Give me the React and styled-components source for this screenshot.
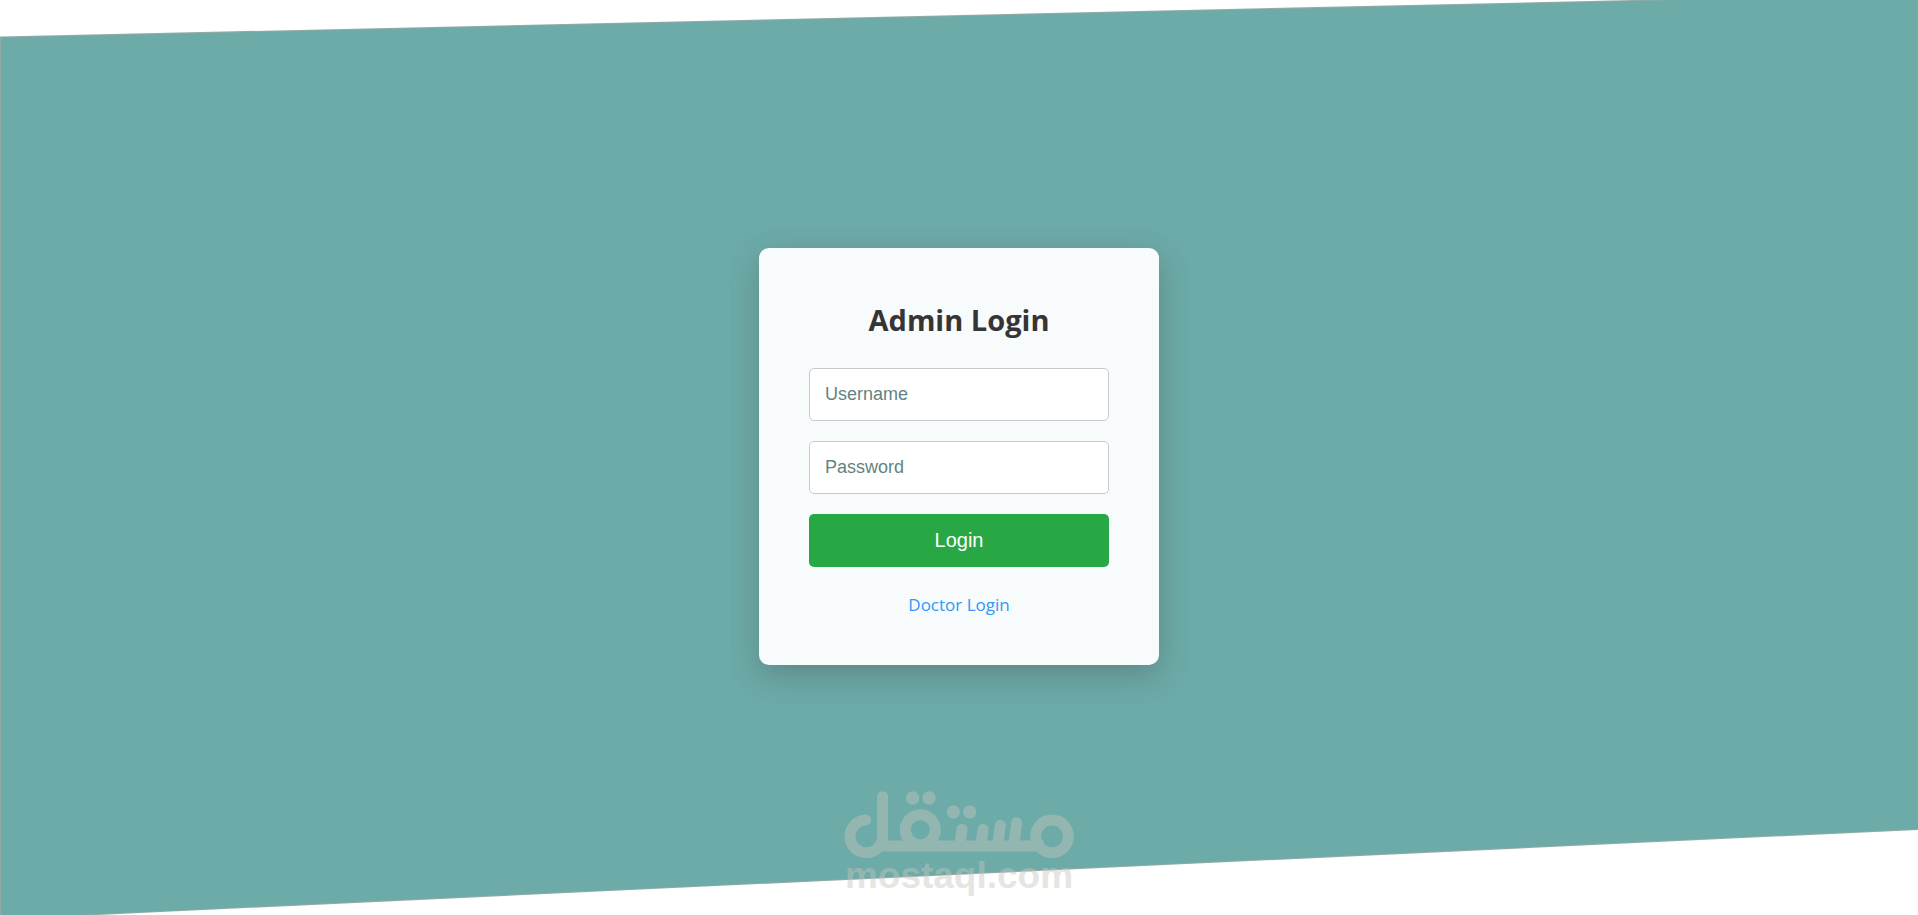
import React from "react";
import styled, { createGlobalStyle } from "styled-components";

const GlobalStyle = createGlobalStyle`
  * { box-sizing: border-box; }
  body {
    margin: 0;
    background: #fff;
    font-family: "Segoe UI", "Open Sans", "Noto Sans", sans-serif;
  }
`;

const Page = styled.main`
  position: relative;
  display: flex;
  align-items: center;
  justify-content: center;
  min-height: 100vh;
  padding-bottom: 2px;
  overflow: hidden;
`;

const Backdrop = styled.div`
  position: absolute;
  inset: 0;
  background: #93aba7;
  clip-path: polygon(0 4%, 100% -0.7%, 100% 90.7%, 0 100.5%);

  &::before {
    content: "";
    position: absolute;
    inset: 0;
    background: #6caba8;
    clip-path: polygon(
      1px calc(4% + 1px),
      100% calc(-0.7% + 1px),
      100% calc(90.7% - 1px),
      1px calc(100.5% - 1px)
    );
  }
`;

const Card = styled.form`
  position: relative;
  display: flex;
  flex-direction: column;
  gap: 20px;
  width: 100%;
  max-width: 400px;
  padding: 50px;
  border-radius: 10px;
  background: #f8fbfc;
  box-shadow: 0 10px 30px rgba(70, 70, 70, 0.34);
`;

const Title = styled.h1`
  margin: 0 0 6px;
  color: #373435;
  font-size: 29px;
  line-height: 44px;
  font-weight: 700;
  text-align: center;
`;

const Field = styled.input`
  width: 100%;
  height: 53px;
  padding: 0 15px;
  border: 1px solid #c3cccb;
  border-radius: 5px;
  background: #fff;
  color: #373435;
  font-family: "Liberation Sans", Arial, sans-serif;
  font-size: 18px;
  &::placeholder { color: #648380; opacity: 1; }
`;

const Submit = styled.button`
  width: 100%;
  height: 53px;
  border: 0;
  border-radius: 5px;
  background: #28a745;
  color: #fff;
  font-family: "Liberation Sans", Arial, sans-serif;
  font-size: 20px;
  cursor: pointer;
`;

const SwitchLink = styled.a`
  align-self: center;
  padding: 8px 0 0;
  color: #3297f5;
  font-size: 17px;
  line-height: 20px;
  text-decoration: none;
`;

const Watermark = styled.div`
  position: absolute;
  bottom: 22px;
  left: 50%;
  display: flex;
  flex-direction: column;
  align-items: center;
  color: #c8c5be;
  opacity: 0.44;
  transform: translateX(-50%);
  pointer-events: none;
`;

const WatermarkName = styled.span`
  font-family: "Liberation Sans", Arial, sans-serif;
  font-size: 37px;
  font-weight: 700;
  line-height: 34px;
`;

function WatermarkLogo() {
  return (
    <svg width="230" height="68" viewBox="42 34 690 204" fill="none" stroke="currentColor" strokeWidth="33" strokeLinecap="round" aria-hidden="true">
      <path d="M107 121A49 49 0 1 0 158 170V51" />
      <path d="M145 199H640" strokeLinecap="butt" />
      <circle cx="271" cy="150" r="45" />
      <circle cx="666" cy="170" r="49" />
      <path d="M396 149L390 195M459 149L453 195M511 137L503 195M560 129L552 195" />
      <g fill="currentColor" stroke="none">
        <circle cx="248" cy="55" r="20" />
        <circle cx="297" cy="55" r="20" />
        <circle cx="370" cy="97" r="20" />
        <circle cx="419" cy="97" r="20" />
      </g>
    </svg>
  );
}

export default function App() {
  return (
    <>
      <GlobalStyle />
      <Page>
        <Backdrop />
        <Card onSubmit={(event) => event.preventDefault()}>
          <Title>Admin Login</Title>
          <Field type="text" name="username" placeholder="Username" aria-label="Username" />
          <Field type="password" name="password" placeholder="Password" aria-label="Password" />
          <Submit type="submit">Login</Submit>
          <SwitchLink href="#doctor">Doctor Login</SwitchLink>
        </Card>
        <Watermark>
          <WatermarkLogo />
          <WatermarkName>mostaql.com</WatermarkName>
        </Watermark>
      </Page>
    </>
  );
}
